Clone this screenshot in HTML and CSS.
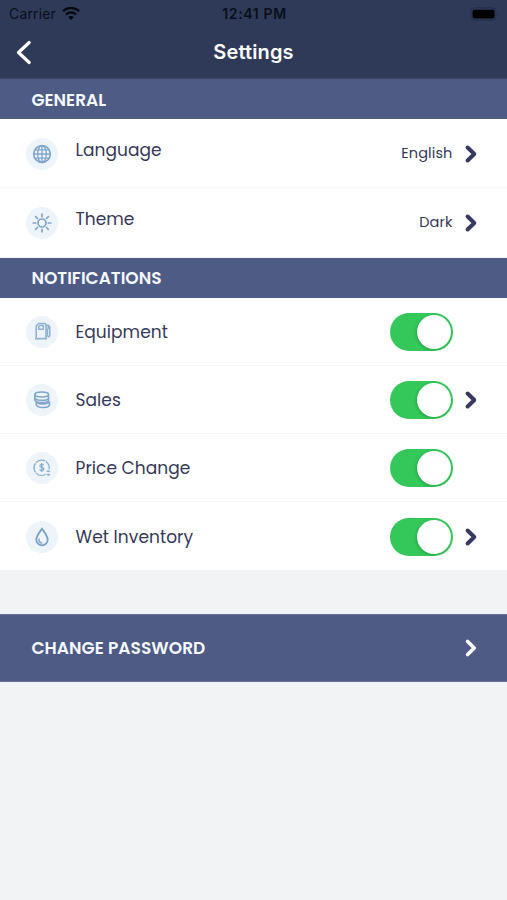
FILE: index.html
```html
<!DOCTYPE html>
<html lang="en">
<head>
<meta charset="utf-8">
<title>Settings</title>
<link rel="stylesheet" href="styles.css">
</head>
<body>
<header class="header">
  <div class="status">
    <div class="carrier"><span>Carrier</span>
      <svg width="18" height="14" viewBox="0 0 18 14"><g fill="none" stroke="#05070c" stroke-width="2.3"><path d="M1 4.200C5.600-.2 12.400-.2 17 4.200"/><path d="M4 7.500c3-2.700 7-2.700 10 0"/></g><path d="M6.200 10c1.700-1.400 3.900-1.400 5.600 0L9 13z" fill="#05070c"/></svg>
    </div>
    <time class="clock">12:41 PM</time>
    <svg class="battery" width="30" height="14" viewBox="0 0 30 14"><rect x=".8" y=".8" width="25.4" height="12.4" rx="4" fill="none" stroke="#252b49"/><rect x="2.500" y="2.700" width="22" height="8.800" rx="2" fill="#000"/><path d="M28 5v4c1.300-.7 1.300-3.300 0-4z" fill="#252b49"/></svg>
  </div>
  <div class="navbar">
    <svg class="back" width="16" height="26" viewBox="0 0 16 26"><path d="M13.200 2.500 2.500 12.500l10.700 10" fill="none" stroke="#fff" stroke-width="3.200" stroke-linecap="round" stroke-linejoin="round"/></svg>
    <h1 class="title">Settings</h1>
  </div>
</header>
<main>
  <h2 class="section">GENERAL</h2>
  <div class="row row-choice">
    <span class="icon"><svg viewBox="0 0 32 32"><g fill="none" stroke="#81a5cb" stroke-width="1.300"><circle cx="16" cy="16" r="8.300" stroke-width="1.700"/><ellipse cx="16" cy="16" rx="4.300" ry="8.300"/><path d="M16 7.700v16.600M7.700 16h16.600M9 11.800h14M9 20.200h14"/></g></svg></span>
    <span class="label">Language</span>
    <span class="value">English</span>
    <svg class="chevron" viewBox="0 0 14 20"><path d="m3.600 3.500 6.700 6.500-6.700 6.500"/></svg>
  </div>
  <div class="row row-choice">
    <span class="icon"><svg viewBox="0 0 32 32"><g fill="none" stroke="#81a5cb" stroke-width="1.700" stroke-linecap="round"><circle cx="16" cy="16" r="4"/><path d="M16 7.200v2.500M16 22.300v2.500M7.200 16h2.500M22.300 16h2.500M9.600 9.600l1.900 1.900M20.500 20.500l1.900 1.900M9.600 22.400l1.900-1.900M20.500 11.500l1.900-1.900"/></g></svg></span>
    <span class="label">Theme</span>
    <span class="value">Dark</span>
    <svg class="chevron" viewBox="0 0 14 20"><path d="m3.600 3.500 6.700 6.500-6.700 6.500"/></svg>
  </div>
  <h2 class="section">NOTIFICATIONS</h2>
  <div class="row">
    <span class="icon"><svg viewBox="0 0 32 32"><g fill="none" stroke="#8fb2d4" stroke-width="1.600" stroke-linejoin="round"><path d="M10.200 22.500V10L12.500 7.500h6.300q1.200 0 1.200 1.200v13.800zM9 22.800h12M12.700 13.300v-2.800l1-1h3.600v3.800z"/><path d="M20 9.300h2.200q1.500.3 1.500 2v8.400q-.3 1.400-1.600.9-.8-.5-.8-2v-5H20M22.200 9.500v3h1.500"/></g></svg></span>
    <span class="label">Equipment</span>
    <span class="toggle"><span class="knob"></span></span>
    <span class="chevron"></span>
  </div>
  <div class="row">
    <span class="icon"><svg viewBox="0 0 32 32"><g fill="none" stroke="#81a5cb" stroke-width="1.600"><ellipse cx="15.700" cy="10.500" rx="6.800" ry="2.500"/><path d="M8.900 10.500v3.300c.5 3 12 3.500 13.600.5v-3.800M8.900 13.800c-.8 2.500.2 3.500 2.300 4.200 3.500 1 9.300.8 11.300-1v-2.700M10.300 17.500v3.200c1.500 3.600 12.200 3.800 13.200.4v-3.600c-1.500 3-9.200 3.500-13.200.5"/></g></svg></span>
    <span class="label">Sales</span>
    <span class="toggle"><span class="knob"></span></span>
    <svg class="chevron" viewBox="0 0 14 20"><path d="m3.600 3.500 6.700 6.500-6.700 6.500"/></svg>
  </div>
  <div class="row">
    <span class="icon"><svg viewBox="0 0 32 32"><g fill="none" stroke="#8aaccd" stroke-width="1.200"><path d="M19.500 22.200A7.600 7.600 0 1 1 23 17.300" stroke-dasharray="10 .8"/><path d="M17.600 13.300c-.7-1.500-3.700-1.300-3.700.5 0 2.200 3.900 1 3.900 3.200 0 2-3.300 2.200-4.100.5M15.800 11v9" stroke-width="1.300"/><path d="m20.800 19.600 1.500-1.500 1.500 1.500zM20.800 22.300l1.500 1.500 1.500-1.500z" stroke-width="1"/></g></svg></span>
    <span class="label">Price Change</span>
    <span class="toggle"><span class="knob"></span></span>
    <span class="chevron"></span>
  </div>
  <div class="row">
    <span class="icon"><svg viewBox="0 0 32 32"><path d="M16 7.700c-2.600 3.700-5.700 7.500-5.700 11a5.700 5.700 0 0 0 11.400 0c0-3.500-3.100-7.300-5.700-11z" fill="none" stroke="#7ba1c7" stroke-width="1.800"/><path d="M13 17.500c-.3 2.600 1 4.400 3.300 4.700" fill="none" stroke="#8db0d2" stroke-width="1.700"/></svg></span>
    <span class="label">Wet Inventory</span>
    <span class="toggle"><span class="knob"></span></span>
    <svg class="chevron" viewBox="0 0 14 20"><path d="m3.600 3.500 6.700 6.500-6.700 6.500"/></svg>
  </div>
  <div class="password">
    <span>CHANGE PASSWORD</span>
    <svg class="chevron" viewBox="0 0 14 20"><path d="m3.600 3.500 6.700 6.500-6.700 6.500"/></svg>
  </div>
</main>
</body>
</html>
```
FILE: styles.css
```css
* { box-sizing: border-box; }
body {
  margin: 0;
  min-height: 900px;
  background: #f2f3f5;
  font-family: Poppins, Inter, sans-serif;
  color: #353858;
}
svg { display: block; flex: none; }
.header {
  height: 79px;
  background: #2f3a59;
  border-bottom: 1px solid #3b4668;
  font-family: Inter, sans-serif;
}
.status {
  height: 27px;
  display: grid;
  grid-template-columns: 1fr auto 1fr;
  align-items: center;
  padding: 0 7px 0 9px;
  color: #0a0e19;
}
.carrier { display: flex; align-items: center; gap: 6px; font-size: 14px; letter-spacing: .15px; }
.clock { font-size: 14px; font-weight: 600; letter-spacing: .65px; }
.battery { justify-self: end; }
.navbar {
  height: 51px;
  display: grid;
  grid-template-columns: 1fr auto 1fr;
  align-items: center;
  padding: 0 16px;
}
.title { margin: 0; padding-bottom: 1px; color: #fff; font-size: 20px; font-weight: 600; letter-spacing: .15px; }
.section {
  height: 40px;
  margin: 0;
  padding: 1px 31.500px 0;
  display: flex;
  align-items: center;
  background: #4e5b85;
  color: #f4f8ff;
  font-size: 17px;
  font-weight: 600;
}
.row {
  height: 68.300px;
  padding: 1px 29px 0 25.500px;
  display: flex;
  align-items: center;
  background: #fff;
  border-bottom: 1px solid #f2f3f5;
}
.row-choice { height: 69.300px; }
.icon { width: 32px; height: 32px; flex: none; border-radius: 50%; background: #edf4fa; }
.label { margin-left: 18px; flex: 1; font-size: 17px; letter-spacing: .06px; white-space: nowrap; }
.row-choice .label { padding-bottom: 7px; }
.value { font-size: 14.500px; letter-spacing: .1px; white-space: nowrap; }
.chevron { width: 14px; height: 20px; flex: none; margin-left: 11.500px; fill: none; stroke: #363a60; stroke-width: 4; stroke-linecap: round; stroke-linejoin: round; }
.toggle {
  width: 63px;
  height: 38px;
  padding: 2px;
  flex: none;
  display: flex;
  justify-content: flex-end;
  border-radius: 19px;
  background: #34c759;
}
.knob { width: 34px; height: 34px; border-radius: 50%; background: #fff; box-shadow: -1px 1px 3px rgba(0, 70, 20, .25); }
.password {
  height: 68px;
  margin-top: 43px;
  padding: 0 29px 0 31.500px;
  display: flex;
  align-items: center;
  justify-content: space-between;
  background: #4e5b85;
  border: solid #687499;
  border-width: 1px 0;
  color: #f4f8ff;
  font-size: 17px;
  font-weight: 600;
  letter-spacing: .05px;
}
.password .chevron { stroke: #fff; stroke-width: 3.600; }
```
